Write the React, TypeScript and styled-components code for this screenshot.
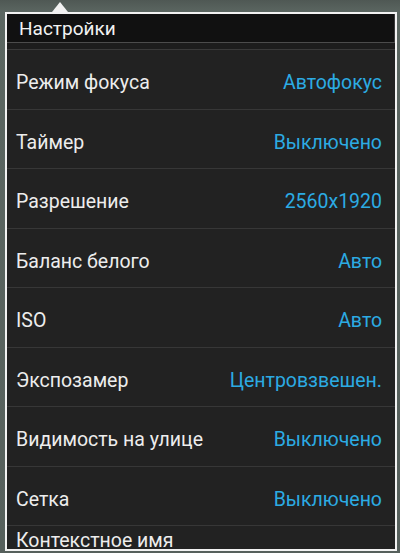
import styled, { createGlobalStyle } from 'styled-components';

const GlobalStyle = createGlobalStyle`
  html, body {
    margin: 0;
    padding: 0;
    background: #56605c;
  }
  body {
    font-family: Roboto, "Noto Sans", "Liberation Sans", sans-serif;
  }
`;

type Setting = {
  label: string;
  value?: string;
};

const SETTINGS: Setting[] = [
  { label: 'Режим фокуса', value: 'Автофокус' },
  { label: 'Таймер', value: 'Выключено' },
  { label: 'Разрешение', value: '2560x1920' },
  { label: 'Баланс белого', value: 'Авто' },
  { label: 'ISO', value: 'Авто' },
  { label: 'Экспозамер', value: 'Центровзвешен.' },
  { label: 'Видимость на улице', value: 'Выключено' },
  { label: 'Сетка', value: 'Выключено' },
];

const Screen = styled.div`
  width: 400px;
  height: 553px;
  overflow: hidden;
  box-sizing: border-box;
  padding: 12px 3px 0 5px;
  background: linear-gradient(180deg, #4f5854 0px, #5b6661 12px, #56605c 100%);
`;

const Panel = styled.div`
  position: relative;
  height: 539px;
  box-sizing: border-box;
  border: 2px solid #f2f2f2;
  background: #222222;
  display: flex;
  flex-direction: column;

  /* pointer towards the menu button */
  &::before {
    content: '';
    position: absolute;
    top: -12px;
    left: 45px;
    border-left: 8px solid transparent;
    border-right: 8px solid transparent;
    border-bottom: 10px solid #f2f2f2;
  }
`;

const TitleBar = styled.div`
  height: 28px;
  flex: none;
  display: flex;
  align-items: center;
  padding-left: 12px;
  background: #111111;
  color: #f2f2f2;
  font-size: 19px;
  border-right: 1px solid #3a3a3a;
`;

const TitleRule = styled.div`
  height: 8px;
  flex: none;
  box-sizing: border-box;
  border-top: 1px solid #4c4c4c;
  border-bottom: 1px solid #3a3a3a;
  background: #1d1d1d;
`;

const List = styled.div`
  flex: 1;
  overflow: hidden;
`;

const Row = styled.div<{ $tall?: boolean }>`
  height: ${({ $tall }) => ($tall ? '72px' : '59.5px')};
  box-sizing: border-box;
  display: flex;
  align-items: ${({ $tall }) => ($tall ? 'flex-start' : 'center')};
  justify-content: space-between;
  padding: ${({ $tall }) => ($tall ? '3px 13px 0 9px' : '7px 13px 0 9px')};
  border-bottom: 1px solid #373737;
  font-size: 19.5px;
`;

const Label = styled.span`
  color: #ededed;
`;

const Value = styled.span`
  color: #2cabe3;
`;

export default function App() {
  return (
    <>
      <GlobalStyle />
      <Screen>
        <Panel>
          <TitleBar>Настройки</TitleBar>
          <TitleRule />
          <List>
            {SETTINGS.map((s) => (
              <Row key={s.label}>
                <Label>{s.label}</Label>
                {s.value && <Value>{s.value}</Value>}
              </Row>
            ))}
            <Row $tall>
              <Label>Контекстное имя</Label>
            </Row>
          </List>
        </Panel>
      </Screen>
    </>
  );
}
